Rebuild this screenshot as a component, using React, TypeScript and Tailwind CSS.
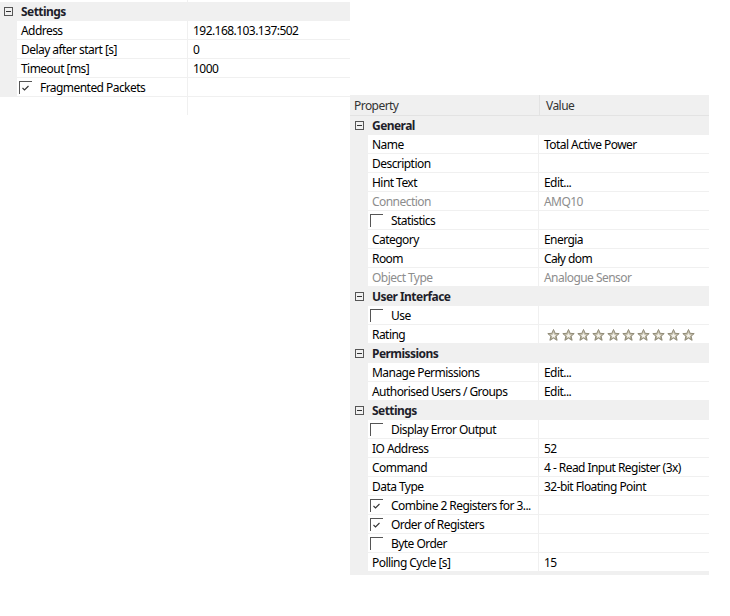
import React from "react";

const font = "font-['Noto_Sans','Open_Sans',sans-serif] text-[12px] tracking-[-0.55px] leading-[18px]";

function MinusBox() {
  return (
    <span className="flex h-[9px] w-[9px] items-center justify-center border border-[#555]">
      <span className="h-px w-[5px] bg-[#333]" />
    </span>
  );
}

function Check({ checked }: { checked?: boolean }) {
  return (
    <span className="flex h-[13px] w-[13px] shrink-0 border-l border-t border-[#555]">
      {checked && (
        <svg width="12" height="12" viewBox="0 0 12 12">
          <polyline points="2.5,6 4.5,8 8.5,4" fill="none" stroke="#333" strokeWidth="1.1" />
        </svg>
      )}
    </span>
  );
}

function Star() {
  return (
    <svg width="13" height="12" viewBox="0 0 13 12">
      <defs>
        <linearGradient id="sg" x1="0" y1="0" x2="0" y2="1">
          <stop offset="0" stopColor="#d8d3c4" />
          <stop offset="1" stopColor="#a59f88" />
        </linearGradient>
      </defs>
      <polygon
        points="6.5,0.5 8.1,4.3 12.2,4.6 9.1,7.2 10.1,11.3 6.5,9.1 2.9,11.3 3.9,7.2 0.8,4.6 4.9,4.3"
        fill="url(#sg)"
        stroke="#8f8a76"
        strokeWidth="1"
        strokeLinejoin="round"
      />
      <polygon points="6.5,4 7.3,5.8 9.2,6 7.8,7.2 8.2,9 6.5,8 4.8,9 5.2,7.2 3.8,6 5.7,5.8" fill="#f4f2ea" />
    </svg>
  );
}

type RowProps = {
  name: string;
  value?: React.ReactNode;
  muted?: boolean;
  check?: "on" | "off";
  gutter: string;
};

function Row({ name, value, muted, check, gutter }: RowProps) {
  const color = muted ? "text-[#8d8d8d]" : "text-black";
  return (
    <div className={`flex h-[19px] whitespace-nowrap ${color}`}>
      <div className={`${gutter} shrink-0 bg-[#f0f0f0]`} />
      <div className="flex w-[171px] shrink-0 items-center overflow-hidden border-b border-r border-[#f0f0f0] bg-white">
        {check ? (
          <div className="flex items-center pl-[2px]">
            <Check checked={check === "on"} />
            <span className="pl-[8px] pt-[1px]">{name}</span>
          </div>
        ) : (
          <span className="pl-[4px] pt-[1px]">{name}</span>
        )}
      </div>
      <div className="flex flex-1 items-center border-b border-[#f0f0f0] bg-white pl-[5px] pt-[1px]">{value}</div>
    </div>
  );
}

function Category({ title, pad }: { title: string; pad: string }) {
  return (
    <div className={`flex h-[19px] items-center bg-[#f0f0f0] ${pad}`}>
      <MinusBox />
      <span className="pl-[8px] pt-[1px] font-bold text-[#1e1e2a]">{title}</span>
    </div>
  );
}

const rightRows: (Omit<RowProps, "gutter"> | { cat: string })[] = [
  { cat: "General" },
  { name: "Name", value: "Total Active Power" },
  { name: "Description" },
  { name: "Hint Text", value: "Edit..." },
  { name: "Connection", value: "AMQ10", muted: true },
  { name: "Statistics", check: "off" },
  { name: "Category", value: "Energia" },
  { name: "Room", value: "Cały dom" },
  { name: "Object Type", value: "Analogue Sensor", muted: true },
  { cat: "User Interface" },
  { name: "Use", check: "off" },
  {
    name: "Rating",
    value: (
      <div className="flex gap-[2px] pl-[3px]">
        {Array.from({ length: 10 }).map((_, i) => (
          <Star key={i} />
        ))}
      </div>
    ),
  },
  { cat: "Permissions" },
  { name: "Manage Permissions", value: "Edit..." },
  { name: "Authorised Users / Groups", value: "Edit..." },
  { cat: "Settings" },
  { name: "Display Error Output", check: "off" },
  { name: "IO Address", value: "52" },
  { name: "Command", value: "4 - Read Input Register (3x)" },
  { name: "Data Type", value: "32-bit Floating Point" },
  { name: "Combine 2 Registers for 3...", check: "on" },
  { name: "Order of Registers", check: "on" },
  { name: "Byte Order", check: "off" },
  { name: "Polling Cycle [s]", value: "15" },
];

export default function App() {
  return (
    <div className={`flex h-[616px] w-[730px] items-start bg-white ${font}`}>
      {/* top-left grid */}
      <div className="w-[350px] shrink-0">
        <div className="flex h-[2px]">
          <div className="w-[188px] border-r border-[#f0f0f0]" />
        </div>
        <Category title="Settings" pad="pl-[4px]" />
        <Row name="Address" value="192.168.103.137:502" gutter="w-[17px]" />
        <Row name="Delay after start [s]" value="0" gutter="w-[17px]" />
        <Row name="Timeout [ms]" value="1000" gutter="w-[17px]" />
        <Row name="Fragmented Packets" check="on" gutter="w-[17px]" />
        <div className="flex h-[18px]">
          <div className="w-[188px] border-r border-[#f0f0f0]" />
        </div>
      </div>

      {/* property grid */}
      <div className="mt-[95px] w-[359px] shrink-0 bg-[#f0f0f0] pb-[3px]">
        <div className="flex h-[21px] border-b border-[#e3e3e3] text-[#333]">
          <div className="flex w-[190px] shrink-0 items-center border-r border-[#e3e3e3] pl-[4px] pt-[1px]">Property</div>
          <div className="flex items-center pl-[6px] pt-[1px]">Value</div>
        </div>
        {rightRows.map((r, i) =>
          "cat" in r ? (
            <Category key={i} title={r.cat} pad="pl-[5px]" />
          ) : (
            <Row key={i} {...r} gutter="w-[18px]" />
          )
        )}
      </div>
    </div>
  );
}
